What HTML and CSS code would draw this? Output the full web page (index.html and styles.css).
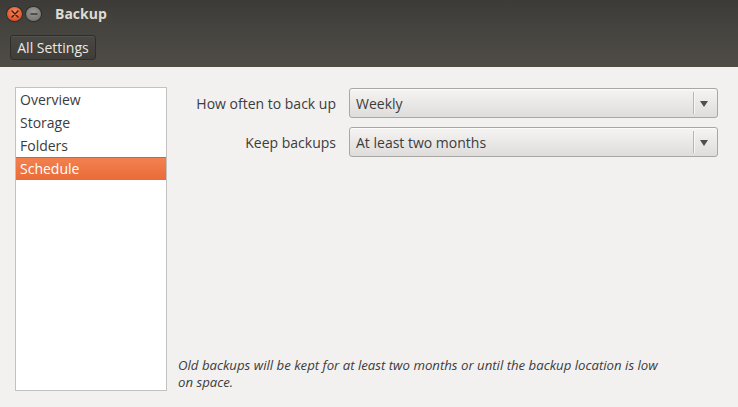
FILE: index.html
```html
<!DOCTYPE html>
<html>
<head>
<meta charset="utf-8">
<link rel="stylesheet" href="styles.css">
</head>
<body>
<div class="window">
  <header class="header">
    <div class="titlebar">
      <div class="controls">
        <span class="wbtn close"><svg width="8" height="8" viewBox="0 0 8 8"><path d="M1 1L7 7M7 1L1 7" stroke="#3a1a0e" stroke-width="1.4" stroke-linecap="round"/></svg></span>
        <span class="wbtn min"><svg width="8" height="8" viewBox="0 0 8 8"><path d="M1 4H7" stroke="#3a3a38" stroke-width="1.4" stroke-linecap="round"/></svg></span>
      </div>
      <span class="title">Backup</span>
    </div>
    <div class="toolbar">
      <button class="allsettings">All Settings</button>
    </div>
  </header>
  <main class="content">
    <ul class="sidebar">
      <li>Overview</li>
      <li>Storage</li>
      <li>Folders</li>
      <li class="selected">Schedule</li>
    </ul>
    <section class="pane">
      <div class="form">
        <label class="label">How often to back up</label>
        <div class="combo"><span class="value">Weekly</span><span class="sep"></span><span class="arrow"></span></div>
        <label class="label">Keep backups</label>
        <div class="combo"><span class="value">At least two months</span><span class="sep"></span><span class="arrow"></span></div>
      </div>
      <p class="note">Old backups will be kept for at least two months or until the backup location is low on space.</p>
    </section>
  </main>
</div>
</body>
</html>
```
FILE: styles.css
```css
* { box-sizing: border-box; }
html, body { margin: 0; padding: 0; }
body {
  width: 738px;
  height: 407px;
  overflow: hidden;
  background: #f2f1f0;
  font-family: "Open Sans", "Noto Sans", sans-serif;
  font-size: 14px;
  color: #3c3c3c;
}
.window { display: flex; flex-direction: column; height: 407px; }
.header {
  height: 68px;
  background: linear-gradient(#3c3b37 0px, #46443f 30px, #504d47 68px);
  display: flex;
  flex-direction: column;
}
.titlebar {
  height: 28px;
  display: flex;
  align-items: center;
  padding-left: 7px;
}
.controls { display: flex; gap: 4px; }
.wbtn {
  width: 15px; height: 14px;
  border-radius: 50%;
  display: flex; align-items: center; justify-content: center;
}
.close { background: radial-gradient(circle at 50% 35%, #f78a5c, #e0542a 70%, #c2431d); box-shadow: 0 0 0 1px #2e2d2a; }
.min { background: radial-gradient(circle at 50% 35%, #9a9994, #7a7975 70%, #64635f); box-shadow: 0 0 0 1px #2e2d2a; }
.title {
  margin-left: 14px;
  color: #dfdbd2;
  font-weight: bold;
  font-size: 14px;
  margin-top: -1px;
}
.toolbar {
  flex: 1;
  display: flex;
  align-items: center;
  padding-left: 10px;
  padding-bottom: 1px;
}
.allsettings {
  height: 25px;
  width: 86px;
  padding: 0;
  background: linear-gradient(#4a4843, #3f3d39);
  border: 1px solid #2f2e2b;
  border-radius: 3px;
  color: #ebe8e2;
  font-family: inherit;
  font-size: 14px;
  box-shadow: inset 0 1px 0 rgba(255,255,255,0.06);
}
.content {
  flex: 1;
  display: flex;
  padding: 20px 20px 16px 15px;
}
.sidebar {
  flex: 0 0 152px;
  list-style: none;
  margin: 0;
  padding: 0;
  width: 152px;
  height: 304px;
  background: #fff;
  border: 1px solid #c4c2bf;
}
.sidebar li {
  height: 23px;
  line-height: 24px;
  padding-left: 4px;
  color: #3c3c3c;
}
.sidebar li.selected {
  background: linear-gradient(#f2814f, #ea6b38);
  color: #fff;
  border-top: 1px solid #d9602f;
  line-height: 22px;
}
.pane {
  flex: 1;
  display: flex;
  flex-direction: column;
  justify-content: space-between;
  padding-left: 11px;
}
.form {
  display: grid;
  grid-template-columns: 158px 369px;
  column-gap: 13px;
  row-gap: 9px;
  align-items: center;
  margin-top: 1px;
}
.label { text-align: right; color: #3c3c3c; }
.combo {
  height: 30px;
  border: 1px solid #a8a7a3;
  border-radius: 3px;
  background: linear-gradient(#f5f4f3, #dedddb);
  display: flex;
  align-items: center;
  padding-left: 6px;
  box-shadow: inset 0 1px 0 #fbfbfa;
}
.value { flex: 1; color: #3c3c3c; }
.sep {
  width: 1px; height: 22px;
  background: #b7b6b3;
  box-shadow: 1px 0 0 #f6f6f5;
}
.arrow {
  width: 0; height: 0;
  margin: 1px 9px 0 6px;
  border-left: 4.5px solid transparent;
  border-right: 4.5px solid transparent;
  border-top: 6px solid #4f4e4b;
}
.note {
  margin: 0;
  width: 490px;
  font-style: italic;
  font-size: 13.2px;
  line-height: 17px;
  color: #3c3c3c;
}
```
